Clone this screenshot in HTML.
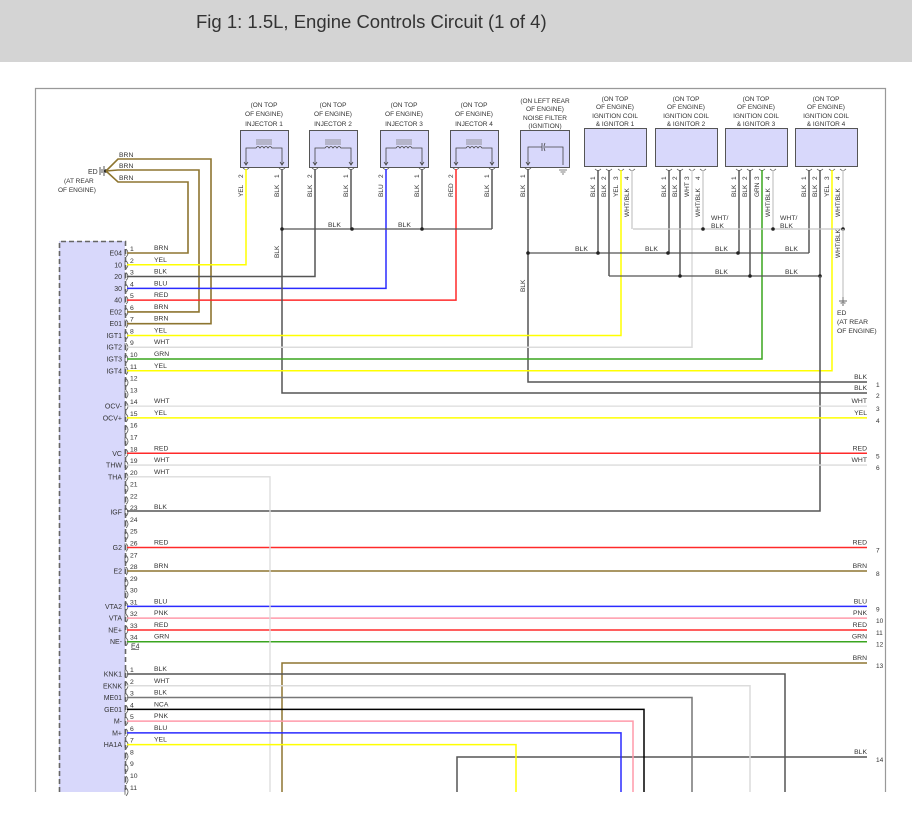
<!DOCTYPE html>
<html><head><meta charset="utf-8"><style>
html,body{margin:0;padding:0;background:#fff;width:912px;height:816px;overflow:hidden}
#hdr{position:absolute;left:0;top:0;width:912px;height:62px;background:#d4d4d4}
#hdr span{position:absolute;left:196px;top:11px;font:18.5px "Liberation Sans",sans-serif;color:#333;white-space:nowrap}
svg{position:absolute;left:0;top:0}
text{font-family:"Liberation Sans",sans-serif;fill:#333}
</style></head><body>
<div id="hdr"><span>Fig 1: 1.5L, Engine Controls Circuit (1 of 4)</span></div>
<svg id="s" width="912" height="816" xmlns="http://www.w3.org/2000/svg"></svg>
<script>
var C={BRN:"#8d7530",YEL:"#ffff00",BLU:"#2b2bff",RED:"#ff2a2a",WHT:"#dcdcdc",GRN:"#3aa51f",BLK:"#555",BLK2:"#777",PNK:"#ff9aaa",NCA:"#000",WB:"#c8c8c8"};
var o=[];
function L(pts,c,w){o.push('<polyline fill="none" stroke="'+c+'" stroke-width="'+(w||1.5)+'" points="'+pts.map(function(p){return p.join(",")}).join(" ")+'"/>');}
function T(x,y,s,sz,anc,rot){o.push('<text x="'+x+'" y="'+y+'" font-size="'+(sz||7)+'"'+(anc?' text-anchor="'+anc+'"':'')+(rot?' transform="rotate(-90 '+x+' '+y+')"':'')+'>'+s+'</text>');}
function D(x,y){o.push('<circle cx="'+x+'" cy="'+y+'" r="1.8" fill="#222"/>');}
o.push('<path d="M35.5,792 V88.5 H885.5 V792" fill="none" stroke="#999" stroke-width="1.2"/>');
o.push('<rect x="59" y="241" width="66" height="551" fill="#d8d8fb"/>');
o.push('<path d="M59.5,792 V241.5 H125.5 V792" fill="none" stroke="#666" stroke-width="1.6" stroke-dasharray="5,3"/>');
function wy(n){return 253+(n-1)*11.78;}
function wy2(n){return 674+(n-1)*11.78;}
var names={1:"E04",2:"10",3:"20",4:"30",5:"40",6:"E02",7:"E01",8:"IGT1",9:"IGT2",10:"IGT3",11:"IGT4",14:"OCV-",15:"OCV+",18:"VC",19:"THW",20:"THA",23:"IGF",26:"G2",28:"E2",31:"VTA2",32:"VTA",33:"NE+",34:"NE-"};
var names2={1:"KNK1",2:"EKNK",3:"ME01",4:"GE01",5:"M-",6:"M+",7:"HA1A"};
var wc={1:"BRN",2:"YEL",3:"BLK",4:"BLU",5:"RED",6:"BRN",7:"BRN",8:"YEL",9:"WHT",10:"GRN",11:"YEL",14:"WHT",15:"YEL",18:"RED",19:"WHT",20:"WHT",23:"BLK",26:"RED",28:"BRN",31:"BLU",32:"PNK",33:"RED",34:"GRN"};
var wc2={1:"BLK",2:"WHT",3:"BLK",4:"NCA",5:"PNK",6:"BLU",7:"YEL"};
function pin(n,y,nm,col){
 T(130,y-2,n,6.8);
 o.push('<path d="M125,'+(y-4)+' v7 M126,'+(y-4)+' q4,4 0,8" fill="none" stroke="#555" stroke-width="0.8"/>');
 if(nm)T(122,y+2.5,nm,7,"end");
 if(col)T(154,y-3,col,6.8);
}
for(var n=1;n<=34;n++)pin(n,wy(n),names[n],wc[n]);
T(131,wy(35)-5,"E4",7);o.push('<line x1="131" y1="'+(wy(35)-4)+'" x2="139" y2="'+(wy(35)-4)+'" stroke="#333" stroke-width="0.6"/>');
for(var n=1;n<=11;n++)pin(n,wy2(n),names2[n],wc2[n]);
o.push('<path d="M100,167 v8 M102,169 v4 M104,166 v10" stroke="#444" stroke-width="0.9"/>');D(106,171);
L([[106,171],[118,159],[211,159],[211,wy(7)],[127,wy(7)]],C.BRN,1.6);
L([[106,171],[118,170],[199,170],[199,wy(6)],[127,wy(6)]],C.BRN,1.6);
L([[106,171],[118,182],[188,182],[188,wy(1)],[127,wy(1)]],C.BRN,1.6);
T(119,157,"BRN",6.8);T(119,168,"BRN",6.8);T(119,180,"BRN",6.8);
T(88,174,"ED",7);T(64,183,"(AT REAR",6.5);T(58,192,"OF ENGINE)",6.5);
var inj=[[240,"YEL",2,"BLK"],[309,"BLK",3,"BLK"],[380,"BLU",4,"BLK"],[450,"RED",5,"BLK"]];
inj.forEach(function(a,i){
 var x=a[0],cx=x+24,p2=x+6,p1=x+42;
 T(cx,107,"(ON TOP",6.5,"middle");T(cx,116,"OF ENGINE)",6.5,"middle");T(cx,126,"INJECTOR "+(i+1),6.5,"middle");
 o.push('<rect x="'+x+'.5" y="130.5" width="48" height="37" fill="#d8d8fb" stroke="#555" stroke-width="1"/>');
 o.push('<path d="M'+(cx-8)+',140h16M'+(cx-8)+',142h16M'+(cx-8)+',144h16" stroke="#777" stroke-width="0.7"/>');
 o.push('<path d="M'+p2+',165 V148 H'+(cx-8)+' q2,-3 4,0 q2,-3 4,0 q2,-3 4,0 q2,-3 4,0 H'+p1+' V165 M'+(p2-2)+',162 l2,3 l2,-3 M'+(p1-2)+',162 l2,3 l2,-3" fill="none" stroke="#444" stroke-width="0.8"/>');
 o.push('<path d="M'+(p2-3)+',168 q3,3 6,0 M'+(p1-3)+',168 q3,3 6,0" fill="none" stroke="#555" stroke-width="0.8"/>');
 T(p2-3,178,"2",6.5,null,1);T(p1-3,178,"1",6.5,null,1);
 T(p2-3,197,a[1],6.5,null,1);T(p1-3,197,"BLK",6.5,null,1);
 L([[p2,169],[p2,wy(a[2])],[127,wy(a[2])]],C[a[1]],1.5);
 L([[p1,169],[p1,229]],C.BLK,1.5);
});
L([[282,229],[282,393],[867,393]],C.BLK,1.5);
L([[282,229],[492,229]],C.BLK,1.3);D(282,229);D(352,229);D(422,229);
T(328,227,"BLK",6.8);T(398,227,"BLK",6.8);T(279,258,"BLK",6.5,null,1);
T(545,103,"(ON LEFT REAR",6.5,"middle");T(545,111,"OF ENGINE)",6.5,"middle");T(545,120,"NOISE FILTER",6.5,"middle");T(545,128,"(IGNITION)",6.5,"middle");
o.push('<rect x="520.5" y="130.5" width="49" height="37" fill="#d8d8fb" stroke="#555" stroke-width="1"/>');
o.push('<path d="M528,165 V147 H542 M542,143v8 M545,143 q-2,4 0,8 M545,147 H563 V165 M526,162 l2,3 l2,-3" fill="none" stroke="#444" stroke-width="0.8"/>');
o.push('<path d="M525,168 q3,3 6,0 M559,170h8 M560.5,172h5 M562,174h2" fill="none" stroke="#555" stroke-width="0.8"/>');
T(525,178,"1",6.5,null,1);T(525,197,"BLK",6.5,null,1);T(525,292,"BLK",6.5,null,1);
L([[528,169],[528,382],[867,382]],C.BLK,1.5);
var cx0=[584,655,725,795],p3c=["YEL","WHT","GRN","YEL"],tgt=[8,9,10,11];
cx0.forEach(function(x,i){
 var cx=x+31;
 T(cx,101,"(ON TOP",6.5,"middle");T(cx,109,"OF ENGINE)",6.5,"middle");T(cx,118,"IGNITION COIL",6.5,"middle");T(cx,126,"&amp; IGNITOR "+(i+1),6.5,"middle");
 o.push('<rect x="'+x+'.5" y="128.5" width="62" height="38" fill="#d8d8fb" stroke="#555" stroke-width="1"/>');
 var ps=[x+14,x+25,x+37,x+48];
 ps.forEach(function(px,k){o.push('<path d="M'+(px-3)+',169 q3,3 6,0" fill="none" stroke="#555" stroke-width="0.8"/>');T(px-3,180,""+(k+1),6.5,null,1);});
 T(ps[0]-3,197,"BLK",6.5,null,1);T(ps[1]-3,197,"BLK",6.5,null,1);T(ps[2]-3,197,p3c[i],6.5,null,1);T(ps[3]-3,217,"WHT/BLK",6.5,null,1);
 L([[ps[0],170],[ps[0],253]],C.BLK,1.5);
 L([[ps[1],170],[ps[1],276]],C.BLK,1.5);
 L([[ps[2],170],[ps[2],wy(tgt[i])],[127,wy(tgt[i])]],C[p3c[i]],1.5);
 L([[ps[3],170],[ps[3],229]],C.WB,1.3);
});
L([[528,253],[809,253]],C.BLK,1.3);[528,598,668,738].forEach(function(x){D(x,253)});
L([[609,276],[820,276]],C.BLK,1.3);[680,750,820].forEach(function(x){D(x,276)});
L([[633,229],[843,229]],C.WB,1.3);[703,773,843].forEach(function(x){D(x,229)});
L([[843,229],[843,297]],C.WB,1.3);
o.push('<path d="M843,297v6 M839,301h8 M840.5,303h5 M842,305h2" stroke="#666" stroke-width="0.9"/>');
T(840,258,"WHT/BLK",6.5,null,1);
T(711,220,"WHT/",6.8);T(711,228,"BLK",6.8);T(780,220,"WHT/",6.8);T(780,228,"BLK",6.8);
[[575,251],[645,251],[715,251],[785,251]].forEach(function(p){T(p[0],p[1],"BLK",6.8)});
[[715,274],[785,274]].forEach(function(p){T(p[0],p[1],"BLK",6.8)});
T(837,315,"ED",6.8);T(837,324,"(AT REAR",6.8);T(837,333,"OF ENGINE)",6.8);
L([[820,276],[820,511],[127,511]],C.BLK,1.5);
[[14,"WHT",3],[15,"YEL",4],[18,"RED",5],[19,"WHT",6],[26,"RED",7],[28,"BRN",8],[31,"BLU",9],[32,"PNK",10],[33,"RED",11],[34,"GRN",12]].forEach(function(a){
 var y=wy(a[0]);L([[127,y],[867,y]],C[a[1]],a[1]=="WHT"?1.3:1.5);T(867,y-3,a[1],6.8,"end");T(876,y+5,a[2],6.5);
});
T(867,379,"BLK",6.8,"end");T(876,387,"1",6.5);
T(867,390,"BLK",6.8,"end");T(876,398,"2",6.5);
L([[127,wy(20)],[270,wy(20)],[270,792]],C.WHT,1.3);
L([[282,792],[282,663],[867,663]],C.BRN,1.5);T(867,660,"BRN",6.8,"end");T(876,668,"13",6.5);
L([[457,792],[457,757],[867,757]],C.BLK,1.5);T(867,754,"BLK",6.8,"end");T(876,762,"14",6.5);
[[1,"BLK",785],[2,"WHT",750],[3,"BLK2",692],[4,"NCA",644],[5,"PNK",633],[6,"BLU",621],[7,"YEL",516]].forEach(function(a){
 var y=wy2(a[0]);L([[127,y],[a[2],y],[a[2],792]],C[a[1]],1.5);
});
document.getElementById("s").innerHTML=o.join("");
</script>
</body></html>
